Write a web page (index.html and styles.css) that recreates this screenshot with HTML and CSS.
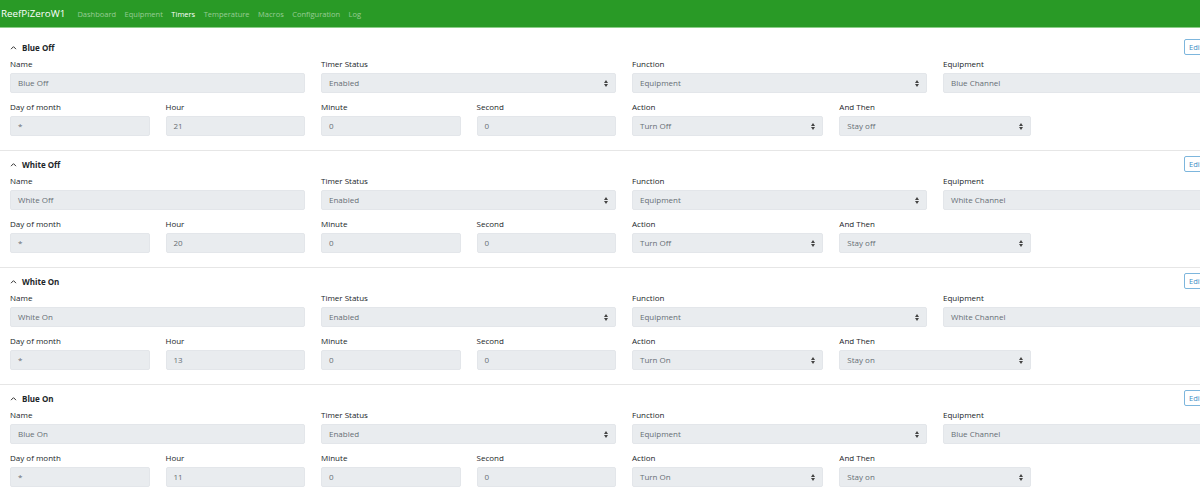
FILE: index.html
```html
<!DOCTYPE html>
<html lang="en">
<head>
<meta charset="utf-8">
<title>ReefPiZeroW1 - Timers</title>
<link rel="stylesheet" href="styles.css">
</head>
<body>
<nav class="navbar">
  <span class="brand">ReefPiZeroW1</span>
  <ul class="nav">
    <li class="nav-link">Dashboard</li>
    <li class="nav-link">Equipment</li>
    <li class="nav-link active">Timers</li>
    <li class="nav-link">Temperature</li>
    <li class="nav-link">Macros</li>
    <li class="nav-link">Configuration</li>
    <li class="nav-link">Log</li>
  </ul>
</nav>
<main class="page">

  <section class="timer">
    <div class="timer-head">
      <span class="title"><svg class="caret" viewBox="0 0 8 6" width="7" height="5"><polyline points="1,5 4,2 7,5" fill="none" stroke="#333" stroke-width="1.2"/></svg>Blue Off</span>
      <button class="btn-edit">Edit</button>
    </div>
    <div class="row">
      <div class="col-3"><label>Name</label><div class="control">Blue Off</div></div>
      <div class="col-3"><label>Timer Status</label><div class="control select">Enabled<svg class="arrows" viewBox="0 0 4 7" width="4" height="7"><path d="M0 3 L2 0 L4 3 Z M0 4 L2 7 L4 4 Z" fill="#444"/></svg></div></div>
      <div class="col-3"><label>Function</label><div class="control select">Equipment<svg class="arrows" viewBox="0 0 4 7" width="4" height="7"><path d="M0 3 L2 0 L4 3 Z M0 4 L2 7 L4 4 Z" fill="#444"/></svg></div></div>
      <div class="col-3"><label>Equipment</label><div class="control">Blue Channel</div></div>
    </div>
    <div class="row row-2">
      <div class="col-6"><div class="row">
        <div class="col-3"><label>Day of month</label><div class="control">*</div></div>
        <div class="col-3"><label>Hour</label><div class="control">21</div></div>
        <div class="col-3"><label>Minute</label><div class="control">0</div></div>
        <div class="col-3"><label>Second</label><div class="control">0</div></div>
      </div></div>
      <div class="col-2"><label>Action</label><div class="control select">Turn Off<svg class="arrows" viewBox="0 0 4 7" width="4" height="7"><path d="M0 3 L2 0 L4 3 Z M0 4 L2 7 L4 4 Z" fill="#444"/></svg></div></div>
      <div class="col-2"><label>And Then</label><div class="control select">Stay off<svg class="arrows" viewBox="0 0 4 7" width="4" height="7"><path d="M0 3 L2 0 L4 3 Z M0 4 L2 7 L4 4 Z" fill="#444"/></svg></div></div>
    </div>
  </section>

  <section class="timer">
    <div class="timer-head">
      <span class="title"><svg class="caret" viewBox="0 0 8 6" width="7" height="5"><polyline points="1,5 4,2 7,5" fill="none" stroke="#333" stroke-width="1.2"/></svg>White Off</span>
      <button class="btn-edit">Edit</button>
    </div>
    <div class="row">
      <div class="col-3"><label>Name</label><div class="control">White Off</div></div>
      <div class="col-3"><label>Timer Status</label><div class="control select">Enabled<svg class="arrows" viewBox="0 0 4 7" width="4" height="7"><path d="M0 3 L2 0 L4 3 Z M0 4 L2 7 L4 4 Z" fill="#444"/></svg></div></div>
      <div class="col-3"><label>Function</label><div class="control select">Equipment<svg class="arrows" viewBox="0 0 4 7" width="4" height="7"><path d="M0 3 L2 0 L4 3 Z M0 4 L2 7 L4 4 Z" fill="#444"/></svg></div></div>
      <div class="col-3"><label>Equipment</label><div class="control">White Channel</div></div>
    </div>
    <div class="row row-2">
      <div class="col-6"><div class="row">
        <div class="col-3"><label>Day of month</label><div class="control">*</div></div>
        <div class="col-3"><label>Hour</label><div class="control">20</div></div>
        <div class="col-3"><label>Minute</label><div class="control">0</div></div>
        <div class="col-3"><label>Second</label><div class="control">0</div></div>
      </div></div>
      <div class="col-2"><label>Action</label><div class="control select">Turn Off<svg class="arrows" viewBox="0 0 4 7" width="4" height="7"><path d="M0 3 L2 0 L4 3 Z M0 4 L2 7 L4 4 Z" fill="#444"/></svg></div></div>
      <div class="col-2"><label>And Then</label><div class="control select">Stay off<svg class="arrows" viewBox="0 0 4 7" width="4" height="7"><path d="M0 3 L2 0 L4 3 Z M0 4 L2 7 L4 4 Z" fill="#444"/></svg></div></div>
    </div>
  </section>

  <section class="timer">
    <div class="timer-head">
      <span class="title"><svg class="caret" viewBox="0 0 8 6" width="7" height="5"><polyline points="1,5 4,2 7,5" fill="none" stroke="#333" stroke-width="1.2"/></svg>White On</span>
      <button class="btn-edit">Edit</button>
    </div>
    <div class="row">
      <div class="col-3"><label>Name</label><div class="control">White On</div></div>
      <div class="col-3"><label>Timer Status</label><div class="control select">Enabled<svg class="arrows" viewBox="0 0 4 7" width="4" height="7"><path d="M0 3 L2 0 L4 3 Z M0 4 L2 7 L4 4 Z" fill="#444"/></svg></div></div>
      <div class="col-3"><label>Function</label><div class="control select">Equipment<svg class="arrows" viewBox="0 0 4 7" width="4" height="7"><path d="M0 3 L2 0 L4 3 Z M0 4 L2 7 L4 4 Z" fill="#444"/></svg></div></div>
      <div class="col-3"><label>Equipment</label><div class="control">White Channel</div></div>
    </div>
    <div class="row row-2">
      <div class="col-6"><div class="row">
        <div class="col-3"><label>Day of month</label><div class="control">*</div></div>
        <div class="col-3"><label>Hour</label><div class="control">13</div></div>
        <div class="col-3"><label>Minute</label><div class="control">0</div></div>
        <div class="col-3"><label>Second</label><div class="control">0</div></div>
      </div></div>
      <div class="col-2"><label>Action</label><div class="control select">Turn On<svg class="arrows" viewBox="0 0 4 7" width="4" height="7"><path d="M0 3 L2 0 L4 3 Z M0 4 L2 7 L4 4 Z" fill="#444"/></svg></div></div>
      <div class="col-2"><label>And Then</label><div class="control select">Stay on<svg class="arrows" viewBox="0 0 4 7" width="4" height="7"><path d="M0 3 L2 0 L4 3 Z M0 4 L2 7 L4 4 Z" fill="#444"/></svg></div></div>
    </div>
  </section>

  <section class="timer">
    <div class="timer-head">
      <span class="title"><svg class="caret" viewBox="0 0 8 6" width="7" height="5"><polyline points="1,5 4,2 7,5" fill="none" stroke="#333" stroke-width="1.2"/></svg>Blue On</span>
      <button class="btn-edit">Edit</button>
    </div>
    <div class="row">
      <div class="col-3"><label>Name</label><div class="control">Blue On</div></div>
      <div class="col-3"><label>Timer Status</label><div class="control select">Enabled<svg class="arrows" viewBox="0 0 4 7" width="4" height="7"><path d="M0 3 L2 0 L4 3 Z M0 4 L2 7 L4 4 Z" fill="#444"/></svg></div></div>
      <div class="col-3"><label>Function</label><div class="control select">Equipment<svg class="arrows" viewBox="0 0 4 7" width="4" height="7"><path d="M0 3 L2 0 L4 3 Z M0 4 L2 7 L4 4 Z" fill="#444"/></svg></div></div>
      <div class="col-3"><label>Equipment</label><div class="control">Blue Channel</div></div>
    </div>
    <div class="row row-2">
      <div class="col-6"><div class="row">
        <div class="col-3"><label>Day of month</label><div class="control">*</div></div>
        <div class="col-3"><label>Hour</label><div class="control">11</div></div>
        <div class="col-3"><label>Minute</label><div class="control">0</div></div>
        <div class="col-3"><label>Second</label><div class="control">0</div></div>
      </div></div>
      <div class="col-2"><label>Action</label><div class="control select">Turn On<svg class="arrows" viewBox="0 0 4 7" width="4" height="7"><path d="M0 3 L2 0 L4 3 Z M0 4 L2 7 L4 4 Z" fill="#444"/></svg></div></div>
      <div class="col-2"><label>And Then</label><div class="control select">Stay on<svg class="arrows" viewBox="0 0 4 7" width="4" height="7"><path d="M0 3 L2 0 L4 3 Z M0 4 L2 7 L4 4 Z" fill="#444"/></svg></div></div>
    </div>
  </section>

</main>
</body>
</html>
```
FILE: styles.css
```css
html, body {
  margin: 0;
  padding: 0;
  overflow: hidden;
  background: #fff;
}
body {
  font-family: "Open Sans", "Noto Sans", "Liberation Sans", sans-serif;
  font-size: 8px;
  color: #212529;
}
.navbar {
  height: 27px;
  background: #299a26;
  border-bottom: 1px solid #8ccf88;
  display: flex;
  align-items: center;
  padding-left: 1px;
}
.brand {
  color: #fff;
  font-size: 9.8px;
  margin-right: 12px;
}
.nav {
  list-style: none;
  margin: 0;
  padding: 0;
  display: flex;
  gap: 8.5px;
}
.nav-link {
  color: rgba(255, 255, 255, 0.5);
  font-size: 7.5px;
}
.nav-link.active {
  color: #fff;
}
.page {
  width: 1248px;
  padding-top: 6px;
}
.timer {
  padding: 5px 10px 13px;
  border-bottom: 1px solid #e6e6e6;
  height: 98px;
}
.timer-head {
  display: flex;
  align-items: center;
  justify-content: space-between;
  height: 16px;
  margin-bottom: 3px;
  padding-right: 28px;
}
.title {
  font-weight: 700;
  display: flex;
  align-items: center;
  gap: 5px;
}
.caret {
  display: block;
}
.btn-edit {
  font-family: inherit;
  font-size: 7.5px;
  color: #3b8dc5;
  background: #fff;
  border: 1px solid #7db6dd;
  border-radius: 2px;
  height: 16px;
  width: 26px;
  padding: 0 4px;
  text-align: left;
}
.row {
  display: flex;
  margin: 0 -8px;
}
.row-2 {
  margin-top: 8px;
}
.col-3 { flex: 0 0 25%; padding: 0 8px; box-sizing: border-box; }
.col-6 { flex: 0 0 50%; padding: 0 8px; box-sizing: border-box; }
.col-2 { flex: 0 0 16.6667%; padding: 0 8px; box-sizing: border-box; }
label {
  display: block;
  height: 12px;
  line-height: 12px;
  margin-bottom: 3px;
}
.control {
  height: 20px;
  line-height: 20px;
  background: #e9ecef;
  border: 1px solid #e3e6ea;
  border-radius: 2px;
  box-sizing: border-box;
  padding: 0 7px;
  color: #676e75;
  display: flex;
  align-items: center;
  justify-content: space-between;
}
.arrows {
  display: block;
}
```
